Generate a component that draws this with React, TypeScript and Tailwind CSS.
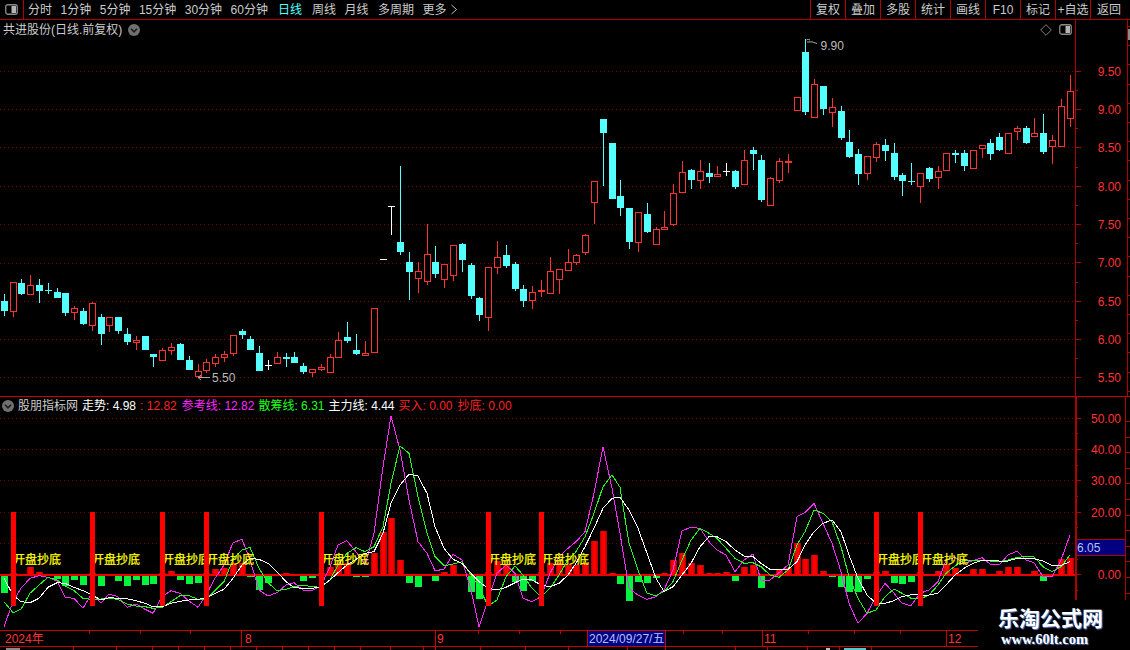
import React from "react";

type C = [number, number, number, number, string];
const A: C[] = [
[102,123,153,168,"c"],[67,67,155,170,"r"],[57,69,102,105,"c"],[45,76,104,106,"r"],[57,75,93,129,"c"],[69,90,92,102,"c"],[84,96,114,114,"c"],[99,99,159,168,"c"],[138,144,159,180,"r"],[144,153,192,195,"c"],
[126,129,198,213,"r"],[162,171,222,255,"c"],[171,171,198,216,"r"],[171,171,213,222,"c"],[204,222,246,255,"c"],[228,240,248,270,"r"],[228,228,270,270,"c"],[282,282,291,321,"c"],[265,271,302,302,"r"],[249,262,272,285,"r"],
[249,252,300,300,"c"],[288,300,330,330,"c"],[312,334,351,351,"r"],[297,306,333,339,"r"],[282,292,311,321,"r"],[273,283,293,306,"r"],[225,226,281,288,"r"],[207,213,225,237,"c"],[228,237,270,270,"c"],[258,279,333,333,"c"],
[300,314,316,330,"w"],[276,292,311,311,"r"],[279,291,297,321,"c"],[276,291,309,309,"c"],[309,318,336,342,"c"],[328,328,339,351,"r"],[312,322,329,333,"r"],[282,292,338,338,"r"],[216,241,293,293,"r"],[186,231,243,249,"c"],
[222,270,282,285,"c"],[243,280,287,287,"r"],[145,145,278,278,"r"],
];
const B: C[] = [
[447,447,449,449,"d"],[289,288,290,375,"w"],[168,396,426,435,"c"],[426,456,486,570,"c"],[456,484,506,549,"r"],[342,433,515,525,"r"],[408,456,492,504,"c"],[462,463,509,534,"r"],[406,406,497,513,"r"],[399,402,450,486,"c"],
[459,465,558,567,"c"],[561,564,615,633,"c"],[472,472,623,663,"r"],[393,442,473,492,"r"],[405,435,468,474,"c"],[456,462,537,543,"c"],[525,537,573,591,"c"],[528,547,572,597,"r"],[510,541,545,561,"R"],[441,484,551,551,"r"],
[478,478,509,552,"r"],[417,457,482,482,"r"],[432,436,458,465,"r"],[372,376,428,435,"r"],[214,214,278,342,"r"],[27,27,69,228,"c"],[99,99,267,267,"c"],[210,258,294,318,"c"],[294,294,396,417,"c"],[307,307,398,426,"r"],
[279,312,366,369,"c"],[351,358,404,404,"r"],[303,352,359,359,"r"],[222,250,346,348,"r"],[153,187,248,248,"r"],[177,180,210,237,"c"],[150,184,212,237,"r"],[159,189,201,219,"c"],[168,191,200,200,"r"],[159,183,185,198,"w"],
[180,183,231,237,"c"],[120,151,224,224,"r"],[111,120,132,180,"c"],
];
const D: C[] = [
[375,390,510,516,"c"],[442,445,527,527,"r"],[384,394,452,458,"r"],[372,394,398,429,"R"],[202,202,242,242,"r"],[28,66,246,255,"c"],[147,163,263,263,"r"],[168,168,237,255,"c"],[204,232,250,291,"r"],[228,243,324,330,"c"],
[300,336,381,384,"c"],[357,372,432,465,"c"],[378,379,431,450,"r"],[336,343,383,396,"r"],[327,345,363,393,"c"],[339,369,441,450,"c"],[429,435,453,498,"c"],[399,453,457,465,"c"],[430,430,470,519,"r"],[411,414,447,456,"c"],
[408,424,443,477,"r"],[370,370,422,422,"r"],[360,369,374,399,"c"],[360,369,408,423,"c"],[361,361,416,418,"r"],[346,346,356,384,"r"],[327,339,372,390,"c"],[309,321,360,363,"c"],[310,310,371,371,"r"],[288,295,305,330,"r"],
[288,294,339,342,"c"],[264,310,320,320,"r"],[252,309,366,372,"c"],[315,331,352,402,"r"],[207,229,350,350,"r"],[135,184,268,291,"r"],
];

const candles = [
  ...A.map((c) => ({ c, base: 260 })),
  ...B.map((c) => ({ c, base: 110 })),
  ...D.map((c) => ({ c, base: 30 })),
];

const barH = [
-18,1,-1,7,2,-1,-4,-11,-5,-10,1,-11,0,-6,-11,-5,-10,-9,1,3,-5,-9,-8,1,5,6,11,11,-2,-15,-8,0,1,0,-6,-3,1,7,11,11,-2,-2,21,
42,56,14,-8,-12,-1,-6,2,9,0,-17,-24,2,13,9,-7,-16,-6,2,11,11,9,9,11,33,43,1,-9,-26,-7,-8,-3,1,14,21,11,9,1,1,2,-6,7,9,
-13,0,5,6,31,15,19,3,-2,-12,-17,-17,-4,2,3,-8,-9,-7,2,0,3,9,6,-1,5,5,0,3,7,7,-1,3,-6,0,15,16,
];

const magA = [380,305,265,235,227,232,243,292,295,325,280,310,282,290,322,312,328,340,290,272,280,303,322,285,235,195,128,118,180,270,288,278,255,248,270,272,258,200,135,122,155,195,100];
const grnA = [305,338,328,280,255,232,240,258,272,295,298,297,295,298,312,318,320,325,322,305,287,287,298,298,272,245,178,150,142,205,248,272,268,260,256,260,262,240,195,160,143,155,140];
const whtA = [235,285,305,308,295,262,248,250,262,272,285,300,293,295,296,302,310,320,320,310,304,300,298,295,280,268,235,195,175,178,190,215,245,263,265,265,260,240,218,195,178,160,155];
const magB = [200,48,150,300,425,460,512,508,463,480,570,680,600,520,495,520,595,605,590,520,470,445,425,395,280,140,265,400,565,585,598,590,570,510,392,382,385,425,450,465,515,480,462];
const grnB = [380,250,138,160,290,400,470,497,492,485,525,560,618,600,530,498,525,565,590,565,525,480,455,410,340,260,225,262,430,510,580,587,575,545,480,420,385,400,415,445,475,490,488];
const whtB = [400,310,255,223,228,280,380,445,478,490,520,545,565,570,562,548,538,540,555,560,550,525,490,440,385,325,295,292,330,385,460,535,575,560,525,490,440,410,410,425,450,468,470];
const magD = [300,300,278,255,110,98,70,130,190,275,370,430,400,350,310,340,370,377,340,330,305,240,232,250,242,233,252,255,225,214,240,248,290,290,240,165];
const grnD = [260,285,292,270,195,155,90,100,125,200,290,355,400,390,350,327,340,355,357,345,315,280,258,240,240,240,243,245,240,232,230,230,260,275,260,225];
const whtD = [250,268,270,268,245,195,155,130,120,155,225,295,345,370,370,362,350,344,345,345,340,315,285,265,250,241,241,243,243,235,235,236,243,256,256,245];

const px = (i: number) => Math.floor(4.2 + 8.81 * i);
const mkLine = (a: number[], b: number[], d: number[]) =>
  [...a.map((v) => 500 + v / 3), ...b.map((v) => 400 + v / 3), ...d.map((v) => 480 + v / 3)]
    .map((y, i) => `${px(i)},${y.toFixed(1)}`)
    .join(" ");

const signals = [1, 10, 18, 23, 36, 55, 61, 99, 104];
const RED = "#ff3232";
const CYAN = "#54ffff";
const LINE = "#b00000";
const GRID = "#780000";
const FONT = "font-['Liberation_Sans','Noto_Sans_CJK_SC',sans-serif]";

const rightTabs = ["复权", "叠加", "多股", "统计", "画线", "F10", "标记", "+自选"];

function PanelIcon() {
  return (
    <svg width="13" height="11" viewBox="0 0 13 11" className="block">
      <rect x="0.75" y="0.75" width="11.5" height="9.5" rx="2" fill="none" stroke="#8a8a8a" strokeWidth="1.3" />
      <rect x="6.5" y="2" width="4.5" height="7" fill="#b4b4b4" />
    </svg>
  );
}

function Chevron() {
  return (
    <svg width="12" height="12" viewBox="0 0 12 12" className="block">
      <circle cx="6" cy="6" r="6" fill="#707070" />
      <path d="M3 4.8 L6 7.8 L9 4.8" fill="none" stroke="#1c1c1c" strokeWidth="1.6" />
    </svg>
  );
}

function TopBar() {
  return (
    <div className="flex h-[20px] shrink-0 items-center border-b border-[#b00000] text-[12px] leading-none text-[#cccccc]">
      <div className="flex h-full w-[24px] items-center justify-center border-r border-[#b00000]">
        <PanelIcon />
      </div>
      <div className="flex items-center gap-[8.5px] pl-[4px]">
        <span>分时</span>
        <span>1分钟</span>
        <span>5分钟</span>
        <span>15分钟</span>
        <span>30分钟</span>
        <span>60分钟</span>
        <span className="ml-[1.5px] text-[#54ffff]">日线</span>
        <span className="ml-[1.5px]">周线</span>
        <span>月线</span>
        <span className="ml-[1px]">多周期</span>
        <span className="flex items-center">
          更多
          <svg width="9" height="11" viewBox="0 0 9 11" className="ml-[3px] block">
            <path d="M1.5 1 L6.5 5.5 L1.5 10" fill="none" stroke="#c0c0c0" />
          </svg>
        </span>
      </div>
      <div className="ml-auto flex h-full">
        {rightTabs.map((t) => (
          <span key={t} className="flex h-full w-[35px] items-center justify-center border-l border-[#b00000] whitespace-nowrap">
            {t}
          </span>
        ))}
        <span className="flex h-full w-[40px] items-center border-l border-[#b00000] pl-[6px]">返回</span>
      </div>
    </div>
  );
}

function PriceChart() {
  const prices = [71.3, 109.3, 147.3, 186, 224.3, 262.5, 301.3, 339.3, 377.3];
  return (
    <svg width="1075" height="357" viewBox="0 39 1075 357" className="block" shapeRendering="crispEdges">
      {prices.map((y) => (
        <line key={y} x1="0" x2="1075" y1={Math.round(y) + 0.5} y2={Math.round(y) + 0.5} stroke={GRID} strokeDasharray="1 3" />
      ))}
      {candles.map(({ c, base }, i) => {
        const [hi, top, bot, lo, kind] = c;
        const x = px(i);
        const yh = Math.round(base + hi / 3);
        const yt = Math.round(base + top / 3);
        const yb = Math.round(base + bot / 3);
        const yl = Math.round(base + lo / 3);
        const col = kind === "c" ? CYAN : kind === "w" || kind === "d" ? "#ffffff" : RED;
        if (kind === "r") {
          return (
            <g key={i}>
              <rect x={x} y={yh} width="1" height={Math.max(yl - yh, 1)} fill={col} />
              <rect x={x - 2.5} y={yt + 0.5} width="6" height={Math.max(yb - yt - 1, 1)} fill="#000" stroke={col} />
            </g>
          );
        }
        return (
          <g key={i}>
            <rect x={x} y={yh} width="1" height={Math.max(yl - yh, 1)} fill={col} />
            <rect x={x - 3} y={yt} width="7" height={Math.max(yb - yt, 1)} fill={col} />
          </g>
        );
      })}
      <g shapeRendering="auto">
        <path d="M198 377.5 H210 M198 377.5 L201 375 M198 377.5 L201 380" fill="none" stroke="#a8a8a8" />
        <text x="212" y="382" fontSize="12" fill="#bcbcbc" className={FONT}>5.50</text>
        <path d="M806.5 40 Q808 38.5 810 40 M807 42 Q812 41 817 43.5" fill="none" stroke="#a8a8a8" />
        <text x="820.5" y="50" fontSize="12" fill="#bcbcbc" className={FONT}>9.90</text>
      </g>
    </svg>
  );
}

function PriceAxis() {
  const labels: [string, number][] = [["9.50", 71], ["9.00", 109], ["8.50", 147], ["8.00", 186], ["7.50", 224], ["7.00", 262], ["6.50", 301], ["6.00", 339], ["5.50", 377]];
  const minors = [90, 128, 167, 205, 243, 282, 320, 358];
  const rights = Array.from({ length: 20 }, (_, k) => 26 + k * 19.2);
  return (
    <svg width="55" height="376" viewBox="1075 20 55 376" className="block" shapeRendering="crispEdges">
      <rect x="1075" y="20" width="1" height="376" fill={LINE} />
      <rect x="1127" y="20" width="1" height="376" fill={LINE} />
      {labels.map(([t, y]) => (
        <g key={t}>
          <rect x="1075" y={y} width="6" height="1" fill={LINE} />
          <text x="1121" y={y + 5} fontSize="12" textAnchor="end" fill={RED} shapeRendering="auto" className={FONT}>{t}</text>
        </g>
      ))}
      {minors.map((y) => (
        <rect key={y} x="1075" y={y} width="3" height="1" fill={LINE} />
      ))}
      {rights.map((y) => (
        <rect key={y} x="1127" y={Math.round(y)} width="3" height="1" fill={LINE} />
      ))}
      <rect x="1128" y="29" width="2" height="11" fill="#8a8a8a" />
    </svg>
  );
}

function Indicator() {
  return (
    <svg width="1075" height="216" viewBox="0 414 1075 216" className="block" shapeRendering="crispEdges">
      <defs>
        <linearGradient id="rb" x1="0" x2="1" y1="0" y2="0">
          <stop offset="0" stopColor="#a80000" />
          <stop offset="0.3" stopColor="#ff0000" />
          <stop offset="0.7" stopColor="#ff0000" />
          <stop offset="1" stopColor="#a80000" />
        </linearGradient>
      </defs>
      {[418, 449, 480, 512, 543].map((y) => (
        <line key={y} x1="0" x2="1075" y1={y + 0.5} y2={y + 0.5} stroke={GRID} strokeDasharray="1 3" />
      ))}
      {barH.map((h, i) => {
        if (h === 0) return null;
        const x = px(i) - 3;
        return h > 0 ? (
          <rect key={i} x={x} y={574 - h} width="7" height={h} fill="url(#rb)" />
        ) : (
          <rect key={i} x={x} y={575} width="7" height={-h} fill="#00f53c" />
        );
      })}
      <rect x="0" y="574" width="1075" height="2" fill="#ee0000" />
      <polyline points={mkLine(magA, magB, magD)} fill="none" stroke="#ff28ff" />
      <polyline points={mkLine(grnA, grnB, grnD)} fill="none" stroke="#1eff1e" />
      <polyline points={mkLine(whtA, whtB, whtD)} fill="none" stroke="#ffffff" />
      {signals.map((s) => (
        <text key={s} x={px(s)} y="564" fontSize="12" fill="#ffff00" stroke="#ffff00" strokeWidth="0.25" shapeRendering="auto" className={FONT}>开盘抄底</text>
      ))}
      {signals.map((s) => (
        <rect key={s} x={px(s) - 2} y="512" width="5" height="94" fill="#ff0000" />
      ))}
    </svg>
  );
}

function IndicatorAxis() {
  const labels: [string, number][] = [["50.00", 418], ["40.00", 449], ["30.00", 480], ["20.00", 512], ["0.00", 574]];
  const minors = [433, 465, 496, 527, 559, 590];
  const rights = Array.from({ length: 12 }, (_, k) => 421 + k * 15.6);
  return (
    <svg width="55" height="233" viewBox="1075 397 55 233" className="block" shapeRendering="crispEdges">
      <rect x="1075" y="397" width="2" height="233" fill={LINE} />
      <rect x="1125" y="397" width="1" height="233" fill={LINE} />
      {labels.map(([t, y]) => (
        <g key={t}>
          <rect x="1075" y={y} width="6" height="1" fill={LINE} />
          <text x="1121" y={y + 5} fontSize="12" textAnchor="end" fill={RED} shapeRendering="auto" className={FONT}>{t}</text>
        </g>
      ))}
      {minors.map((y) => (
        <rect key={y} x="1075" y={y} width="3" height="1" fill={LINE} />
      ))}
      {rights.map((y) => (
        <rect key={y} x="1126" y={Math.round(y)} width="4" height="1" fill={LINE} />
      ))}
      <rect x="1077" y="539" width="48" height="16" fill="#000080" />
      <rect x="1077" y="539" width="48" height="1" fill={LINE} />
      <rect x="1077" y="555" width="48" height="1" fill={LINE} />
      <text x="1077" y="552" fontSize="12" fill="#b4c0ff" shapeRendering="auto" className={FONT}>6.05</text>
    </svg>
  );
}

function DateAxis() {
  const ticks = [89, 140, 190, 478, 519, 560, 683, 722, 808, 854, 900];
  const low = [73, 116, 152, 178, 204, 230, 256, 282, 308, 334, 360, 390, 423, 435, 480, 525, 568, 627, 665, 735, 767, 807, 839, 871];
  const labels: [string, number, number][] = [["8", 241, 245], ["9", 435, 437], ["11", 762, 764], ["12", 946, 948]];
  return (
    <svg width="1130" height="20" viewBox="0 630 1130 20" className="block" shapeRendering="crispEdges">
      <rect x="0" y="630" width="980" height="1" fill="#c80000" />
      <rect x="0" y="646" width="980" height="1" fill="#c80000" />
      {ticks.map((x) => (
        <rect key={x} x={x} y="631" width="1" height="3" fill="#c80000" />
      ))}
      {low.map((x) => (
        <rect key={x} x={x} y="647" width="1" height="3" fill="#c80000" />
      ))}
      <text x="5" y="643" fontSize="12" fill={RED} shapeRendering="auto" className={FONT}>2024年</text>
      {labels.map(([t, d, x]) => (
        <g key={t}>
          <rect x={d} y="631" width="1" height="15" fill="#c80000" />
          <text x={x} y="643" fontSize="12" fill={RED} shapeRendering="auto" className={FONT}>{t}</text>
        </g>
      ))}
      <rect x="587" y="630" width="78" height="16" fill="#000080" stroke="#c80000" />
      <text x="589" y="643" fontSize="12" fill="#b4c0ff" shapeRendering="auto" className={FONT}>2024/09/27/五</text>
      <rect x="6" y="648" width="14" height="2" fill="#8a8a8a" />
      <rect x="826" y="648" width="4" height="2" fill="#c0c0c0" />
      <rect x="844" y="648" width="22" height="2" fill="#54c8c8" />
    </svg>
  );
}

export default function App() {
  return (
    <div className={`relative flex h-[650px] w-[1130px] flex-col overflow-hidden bg-black ${FONT}`}>
      <TopBar />
      <div className="flex h-[377px] shrink-0 border-b border-[#c80000]">
        <div className="flex w-[1075px] flex-col">
          <div className="flex h-[19px] shrink-0 items-center pl-[3px] pr-[3px] text-[12px] leading-none text-[#cccccc]">
            <span>共进股份(日线.前复权)</span>
            <span className="ml-[6px]"><Chevron /></span>
            <svg width="12" height="12" viewBox="0 0 12 12" className="ml-auto mr-[7px] block">
              <path d="M6 .7 L11.3 6 L6 11.3 L.7 6 Z" fill="none" stroke="#808080" />
            </svg>
            <PanelIcon />
          </div>
          <PriceChart />
        </div>
        <PriceAxis />
      </div>
      <div className="flex h-[233px] shrink-0">
        <div className="flex w-[1075px] flex-col">
          <div className="flex h-[17px] shrink-0 items-center gap-[4px] whitespace-nowrap pl-[2px] text-[12px] leading-none">
            <Chevron />
            <span className="text-[#cccccc]">股朋指标网</span>
            <span className="text-white">走势: 4.98</span>
            <span className="text-[#ff2020]">: 12.82</span>
            <span className="ml-[1px] text-[#ff28ff]">参考线: 12.82</span>
            <span className="text-[#1eff1e]">散筹线: 6.31</span>
            <span className="text-white">主力线: 4.44</span>
            <span className="text-[#ff2020]">买入: 0.00</span>
            <span className="ml-[1px] text-[#ff2020]">抄底: 0.00</span>
          </div>
          <Indicator />
        </div>
        <IndicatorAxis />
      </div>
      <DateAxis />
      <div className="absolute bottom-0 right-0 flex h-[50px] w-[152px] flex-col items-start bg-black pl-[20px] pt-[7px] text-white">
        <span className="text-[21px] font-bold leading-[23px] [text-shadow:1px_1px_1px_#6080c0]">乐淘公式网</span>
        <span className="ml-[3px] font-['Liberation_Serif',serif] text-[14.5px] font-bold leading-[19px] [text-shadow:1px_1px_1px_#5070b0]">www.60lt.com</span>
      </div>
    </div>
  );
}
